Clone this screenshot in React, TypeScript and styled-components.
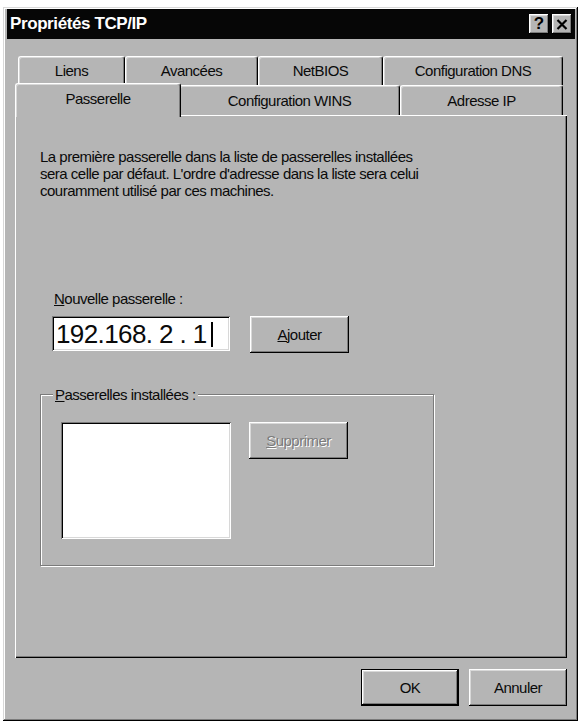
import React from 'react';
import { createGlobalStyle, css, styled } from 'styled-components';

const FACE = '#b5b5b5';
const FONT = `'Liberation Sans', Arial, sans-serif`;

const GlobalStyle = createGlobalStyle`
  html, body {
    margin: 0;
    padding: 0;
    background: #fff;
  }

  body {
    font-family: ${FONT};
    font-size: 15px;
    letter-spacing: -0.5px;
    color: #0a0a0a;
  }
`;

const raised = css`
  box-shadow:
    inset -1px -1px #000,
    inset 1px 1px #fff,
    inset -2px -2px #7b7b7b,
    inset 2px 2px #d8d8d8;
`;

const sunken = css`
  box-shadow:
    inset 1px 1px #7b7b7b,
    inset -1px -1px #fff,
    inset 2px 2px #000,
    inset -2px -2px #d8d8d8;
`;

const Page = styled.div`
  padding: 7px 0 0 3px;
`;

const Window = styled.div`
  box-sizing: border-box;
  width: 575px;
  height: 714px;
  padding: 2px 3px 0 4px;
  display: flex;
  flex-direction: column;
  background: ${FACE};
  box-shadow:
    inset -1px -1px #000,
    inset 1px 1px #d8d8d8,
    inset -2px -2px #7b7b7b,
    inset 2px 2px #fff;
`;

const TitleBar = styled.div`
  height: 30px;
  flex: none;
  display: flex;
  align-items: center;
  justify-content: space-between;
  padding: 0 3px;
  background: #060606;
`;

const Title = styled.span`
  color: #fff;
  font-weight: bold;
  font-size: 17px;
  letter-spacing: -0.4px;
`;

const Controls = styled.div`
  display: flex;
  gap: 3px;
`;

const ControlButton = styled.button`
  width: 20px;
  height: 20px;
  padding: 0;
  border: none;
  background: ${FACE};
  display: flex;
  align-items: center;
  justify-content: center;
  font: bold 17px ${FONT};
  color: #000;
  ${raised}
`;

const Body = styled.div`
  flex: 1;
  display: flex;
  flex-direction: column;
  padding: 17px 8px 0;
`;

const TabRow = styled.div<{ $indent: number; $height: number }>`
  display: flex;
  height: ${p => p.$height}px;
  margin-left: ${p => p.$indent}px;
`;

const Tab = styled.div<{ $width: number; $active?: boolean }>`
  box-sizing: border-box;
  width: ${p => p.$width}px;
  flex: none;
  display: flex;
  align-items: center;
  justify-content: center;
  padding-bottom: 1px;
  background: ${FACE};
  border-top: 1px solid #fff;
  border-left: 1px solid #fff;
  border-right: 1px solid #000;
  border-radius: 3px 3px 0 0;
  box-shadow: inset -1px 0 #7b7b7b, inset 1px 1px #d8d8d8;

  ${p =>
    p.$active &&
    css`
      position: relative;
      z-index: 1;
      margin: -2px -2px -2px;
      padding-bottom: 5px;
    `}
`;

const Panel = styled.div`
  flex: 1;
  box-sizing: border-box;
  padding: 33px 0 0 25px;
  box-shadow:
    inset 1px 1px #fff,
    inset -1px -1px #000,
    inset -2px -2px #7b7b7b;
`;

const Intro = styled.p`
  margin: 0;
  line-height: 17px;
  white-space: nowrap;
`;

const GatewayField = styled.div`
  margin: 91px 0 0 12px;
`;

const FieldLabel = styled.div`
  padding-left: 2px;
  line-height: 17px;
`;

const EntryRow = styled.div`
  display: flex;
  align-items: flex-start;
  gap: 20px;
  margin-top: 9px;
`;

const IpInput = styled.div`
  box-sizing: border-box;
  width: 178px;
  height: 35px;
  display: flex;
  align-items: center;
  padding: 1px 0 0 4px;
  background: #fff;
  font-size: 26px;
  letter-spacing: -0.6px;
  white-space: pre;
  ${sunken}
`;

const Caret = styled.span`
  display: inline-block;
  width: 2px;
  height: 25px;
  margin-left: 4px;
  background: #000;
`;

const Button = styled.button<{ $width?: number; $default?: boolean }>`
  box-sizing: border-box;
  width: ${p => p.$width ?? 99}px;
  height: 37px;
  flex: none;
  padding: 0;
  border: ${p => (p.$default ? '1px solid #000' : 'none')};
  background: ${FACE};
  font: 15px ${FONT};
  letter-spacing: -0.5px;
  color: #0a0a0a;
  ${raised}

  &:disabled {
    color: #7b7b7b;
    text-shadow: 1px 1px #fff;
  }
`;

const GroupBox = styled.div`
  position: relative;
  box-sizing: border-box;
  width: 394px;
  height: 172px;
  margin-top: 41px;
  padding: 27px 0 0 20px;
  display: flex;
  align-items: flex-start;
  gap: 18px;
  border: 1px solid #7b7b7b;
  box-shadow: 1px 1px 0 #fff, inset 1px 1px 0 #fff;
`;

const Legend = styled.span`
  position: absolute;
  top: -9px;
  left: 12px;
  padding: 0 2px;
  background: ${FACE};
  line-height: 17px;
`;

const ListBox = styled.div`
  width: 170px;
  height: 117px;
  background: #fff;
  ${sunken}
`;

const Footer = styled.div`
  display: flex;
  justify-content: flex-end;
  gap: 10px;
  margin: 11px 0 15px;
`;

const backTabs = [
  { label: 'Liens', width: 107 },
  { label: 'Avancées', width: 133 },
  { label: 'NetBIOS', width: 125 },
  { label: 'Configuration DNS', width: 180 },
];

const frontTabs = [
  { label: 'Passerelle', width: 166, active: true },
  { label: 'Configuration WINS', width: 221 },
  { label: 'Adresse IP', width: 163 },
];

const CloseIcon = () => (
  <svg width="12" height="11" viewBox="0 0 12 11">
    <path d="M1.5 1 L10.5 10 M10.5 1 L1.5 10" stroke="#000" strokeWidth="2.2" />
  </svg>
);

const App = () => {
  return (
    <Page>
      <GlobalStyle />
      <Window>
        <TitleBar>
          <Title>Propriétés TCP/IP</Title>
          <Controls>
            <ControlButton>?</ControlButton>
            <ControlButton>
              <CloseIcon />
            </ControlButton>
          </Controls>
        </TitleBar>

        <Body>
          <TabRow $indent={3} $height={29}>
            {backTabs.map(tab => (
              <Tab key={tab.label} $width={tab.width}>
                {tab.label}
              </Tab>
            ))}
          </TabRow>
          <TabRow $indent={2} $height={30}>
            {frontTabs.map(tab => (
              <Tab key={tab.label} $width={tab.width} $active={tab.active}>
                {tab.label}
              </Tab>
            ))}
          </TabRow>

          <Panel>
            <Intro>
              La première passerelle dans la liste de passerelles installées
              <br />
              sera celle par défaut. L'ordre d'adresse dans la liste sera celui
              <br />
              couramment utilisé par ces machines.
            </Intro>

            <GatewayField>
              <FieldLabel>
                <u>N</u>ouvelle passerelle :
              </FieldLabel>
              <EntryRow>
                <IpInput>
                  {'192.168. 2 . 1'}
                  <Caret />
                </IpInput>
                <Button>
                  <u>A</u>jouter
                </Button>
              </EntryRow>
            </GatewayField>

            <GroupBox>
              <Legend>
                <u>P</u>asserelles installées :
              </Legend>
              <ListBox />
              <Button disabled>
                <u>S</u>upprimer
              </Button>
            </GroupBox>
          </Panel>

          <Footer>
            <Button $width={98} $default>
              OK
            </Button>
            <Button $width={98}>Annuler</Button>
          </Footer>
        </Body>
      </Window>
    </Page>
  );
};

export default App;
